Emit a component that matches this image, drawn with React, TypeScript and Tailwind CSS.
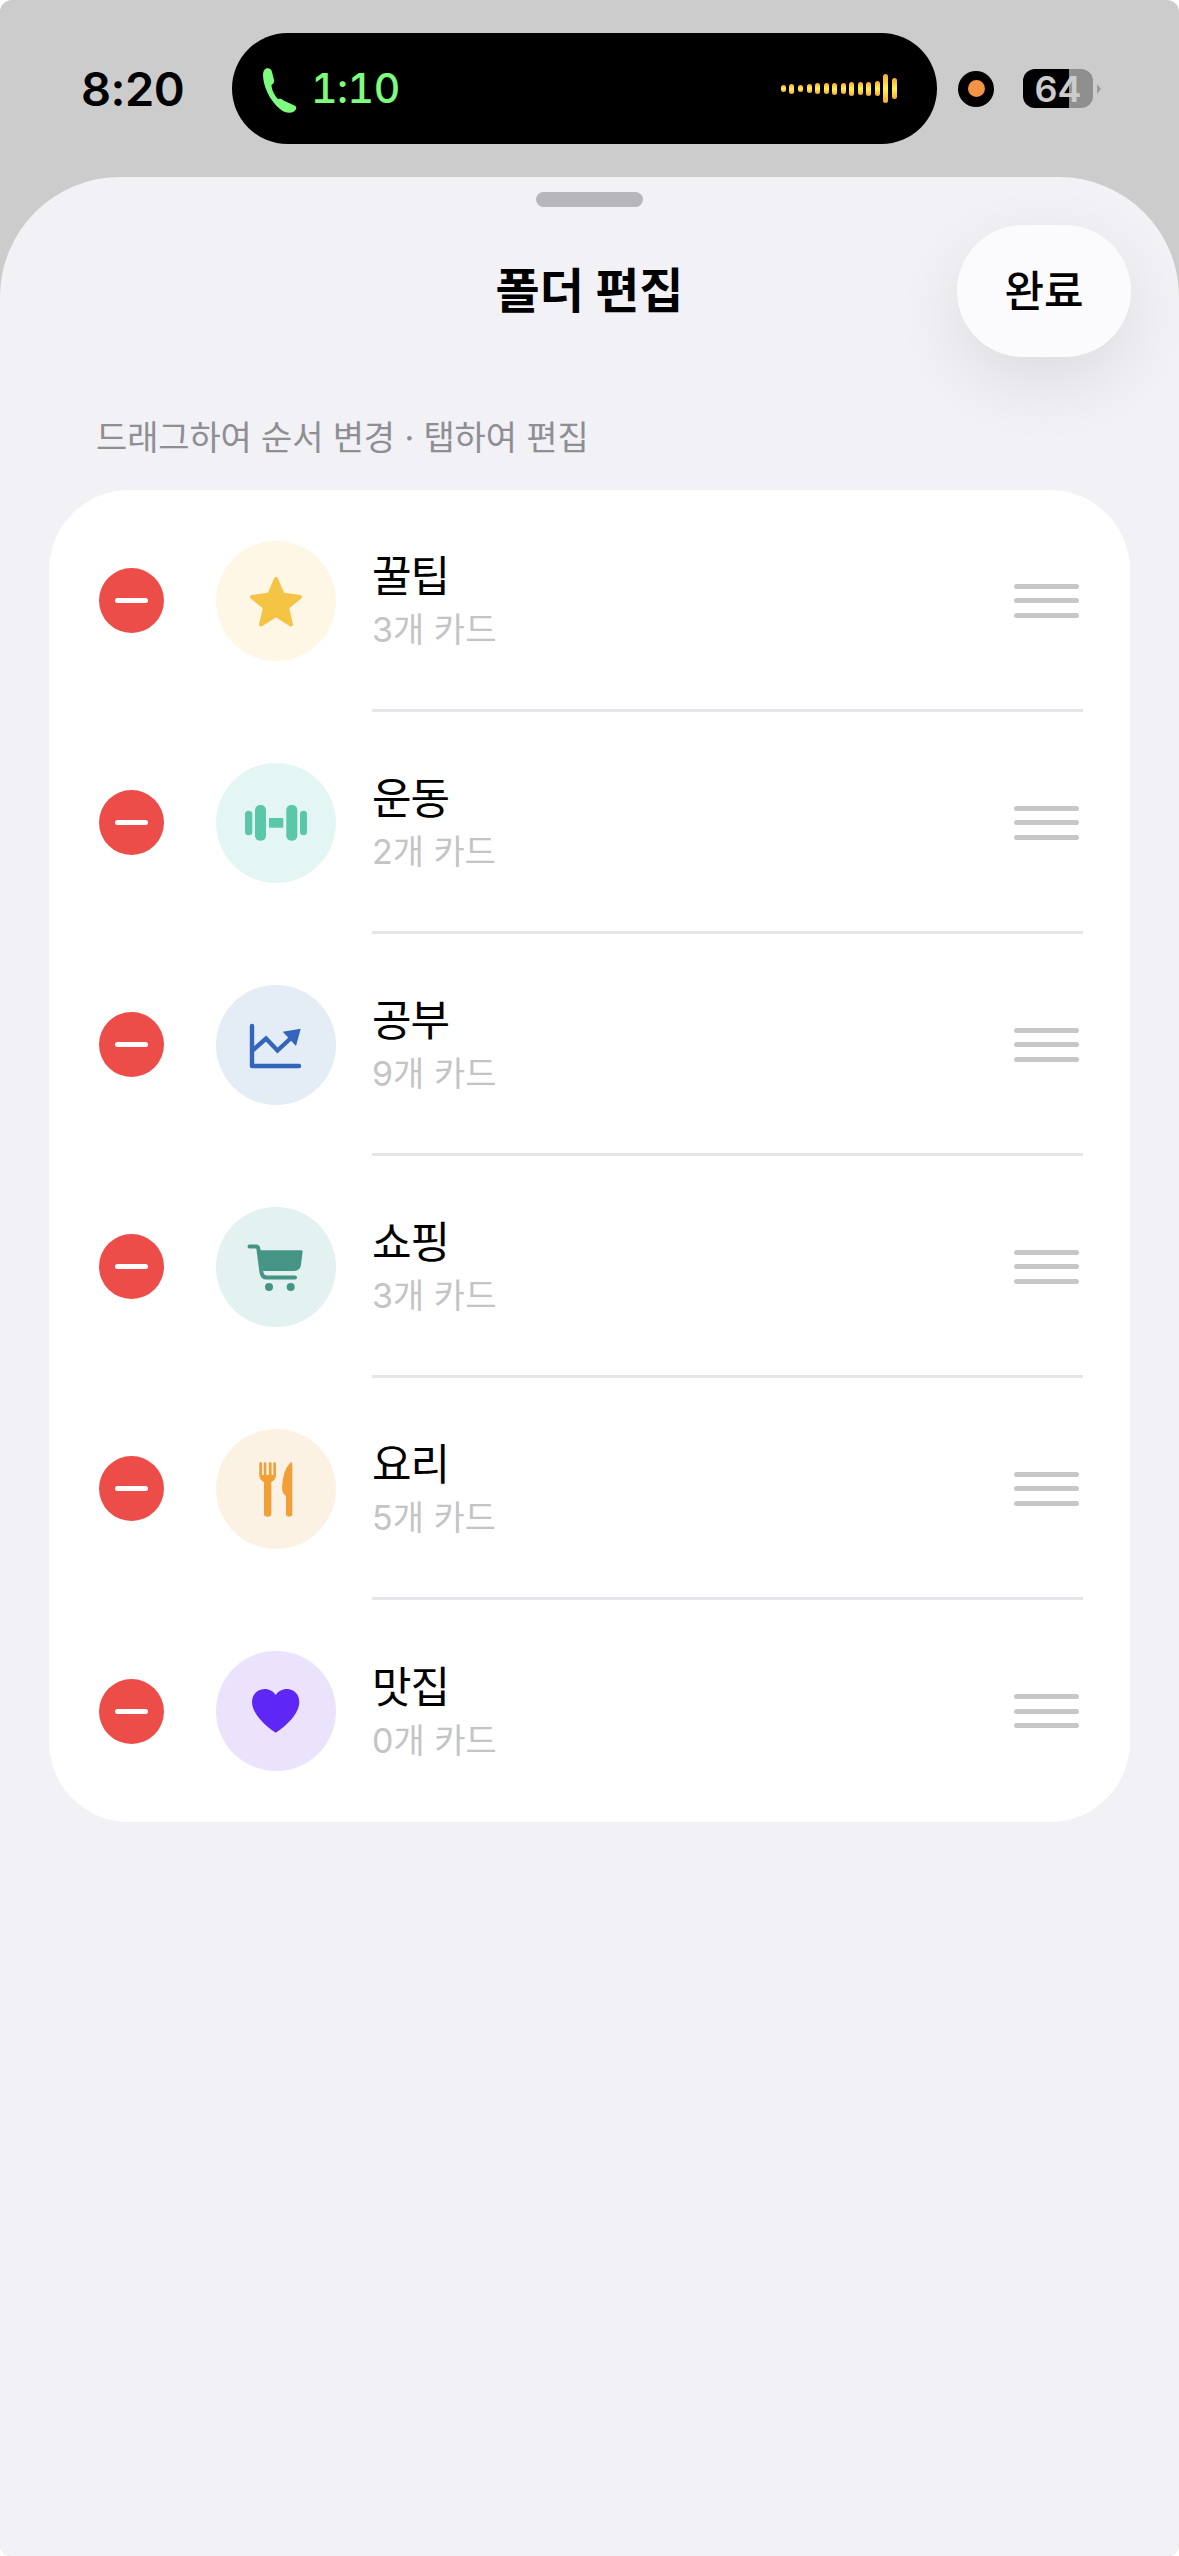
import React from "react";

type Folder = {
  name: string;
  count: number;
  tint: string;
  icon: React.ReactNode;
};

const StarIcon = () => (
  <svg viewBox="0 0 120 120" className="size-[120px]">
    <path
      d="M60 38 L66.7 53.5 L84 56 L71 66.5 L75 83.5 L60 74 L45 83.5 L49 66.5 L36 56 L53.3 53.5 Z"
      fill="#f5c445"
      stroke="#f5c445"
      strokeWidth="4"
      strokeLinejoin="round"
    />
  </svg>
);

const DumbbellIcon = () => (
  <svg viewBox="0 0 120 120" className="size-[120px]" fill="#5ac8a8">
    <rect x="29" y="47.7" width="7.3" height="24.6" rx="3.6" />
    <rect x="39" y="42" width="11" height="35.7" rx="5" />
    <rect x="53" y="55" width="14.3" height="9.7" />
    <rect x="70.3" y="42" width="11" height="35.7" rx="5" />
    <rect x="84" y="47.7" width="7" height="24.6" rx="3.5" />
  </svg>
);

const ChartIcon = () => (
  <svg viewBox="0 0 120 120" className="size-[120px]">
    <path
      d="M36 41 V81 H83"
      fill="none"
      stroke="#3366bb"
      strokeWidth="4.4"
      strokeLinecap="round"
      strokeLinejoin="round"
    />
    <path d="M37 65 L50 53.5 L61.5 65.5 L75 53" fill="none" stroke="#3366bb" strokeWidth="4.4" />
    <path d="M66.7 46.7 L84.7 43.7 L80 61 Z" fill="#3366bb" />
  </svg>
);

const CartIcon = () => (
  <svg viewBox="0 0 120 120" className="size-[120px]">
    <path
      d="M33.5 39.5 H40 Q42 39.5 42.4 42 L45.4 65 Q46 70.6 51 70.6 H79"
      fill="none"
      stroke="#459586"
      strokeWidth="4"
      strokeLinecap="round"
    />
    <path
      d="M43 43.3 H85.5 Q86.8 43.3 86.6 45 L85 57.5 Q84.4 64 78 64 H47.3 Z"
      fill="#459586"
    />
    <circle cx="53" cy="80" r="4" fill="#459586" />
    <circle cx="74.7" cy="80" r="4" fill="#459586" />
  </svg>
);

const CutleryIcon = () => (
  <svg viewBox="0 0 120 120" className="size-[120px]" fill="#f29f38">
    <path d="M43.3 34.5 Q43.3 33 44.6 33 Q46 33 46 34.5 V46 H47.7 V34.5 Q47.7 33 49 33 Q50.4 33 50.4 34.5 V46 H52.9 V34.5 Q52.9 33 54.2 33 Q55.6 33 55.6 34.5 V46 H57.3 V34.5 Q57.3 33 58.6 33 Q60 33 60 34.5 V46 Q60 51 55.3 53 V85 Q55.3 87.7 51.6 87.7 Q48 87.7 48 85 V53 Q43.3 51 43.3 46 Z" />
    <path d="M76.3 35 V85 Q76.3 87.7 73.2 87.7 Q70 87.7 70 85 V67 Q66 64 66 59 Q66.5 42 74 34 Q76.3 32 76.3 35 Z" />
  </svg>
);

const HeartIcon = () => (
  <svg viewBox="0 0 120 120" className="size-[120px]">
    <path
      d="M59.7 81.7 C55 79 36 65 36 51 C36 43 42 38 48.5 38 C53.5 38 57.5 40.5 59.7 44 C62 40.5 66 38 71 38 C77.5 38 83.3 43 83.3 51 C83.3 65 64.5 79 59.7 81.7 Z"
      fill="#5f27f5"
    />
  </svg>
);

const PhoneIcon = () => (
  <svg viewBox="0 0 34 45" className="mt-[4px] h-[45px] w-[34px]">
    <path
      d="M3 0.5 C6 -0.5 8.5 1 9 4 L11 12 C11.5 14.5 10 16 8.5 17 C8.5 21 11 27 15 31 C17 30.5 19 30.5 20.5 32.5 L32.5 38 C34 40 33 42 31 43.5 C27 46 22 45 17 41 C7 33 0 18 0 7 C0 4 1 1.5 3 0.5 Z"
      fill="#7dfc7f"
    />
  </svg>
);

const folders: Folder[] = [
  { name: "꿀팁", count: 3, tint: "bg-[#fef7e6]", icon: <StarIcon /> },
  { name: "운동", count: 2, tint: "bg-[#e3f6f3]", icon: <DumbbellIcon /> },
  { name: "공부", count: 9, tint: "bg-[#e4ecf6]", icon: <ChartIcon /> },
  { name: "쇼핑", count: 3, tint: "bg-[#e3f1f0]", icon: <CartIcon /> },
  { name: "요리", count: 5, tint: "bg-[#fcf2e3]", icon: <CutleryIcon /> },
  { name: "맛집", count: 0, tint: "bg-[#ebe3fc]", icon: <HeartIcon /> },
];

const waveHeights = [7, 10, 7, 9, 11, 11, 12, 11, 14, 13, 14, 15, 29, 21];

const StatusBar = () => (
  <div className="flex h-[177px] shrink-0 items-center pl-[81px]">
    <span className="w-[151px] text-[47px] leading-none font-semibold tracking-[-0.5px] text-black">8:20</span>
    <div className="flex h-[111px] w-[705px] items-center rounded-full bg-black pr-[40px] pl-[31px]">
      <PhoneIcon />
      <span className="ml-[14px] text-[41px] leading-none font-medium tracking-[-0.5px] text-[#7dfc7f] tabular-nums">
        1:10
      </span>
      <div className="ml-auto flex items-center gap-[3.55px]">
        {waveHeights.map((height, i) => (
          <div
            key={i}
            className="w-[5px] rounded-full bg-linear-to-b from-[#f6a838] via-[#fff34f] to-[#f6a838]"
            style={{ height }}
          />
        ))}
      </div>
    </div>
    <div className="ml-[21px] flex size-[36px] items-center justify-center rounded-full bg-black">
      <div className="size-[17px] rounded-full bg-[#f29445]" />
    </div>
    <div className="ml-[29px] flex items-center">
      <div className="flex h-[39px] w-[70px] items-center justify-center rounded-[12px] bg-[linear-gradient(90deg,#000_66%,#8f8f8f_66%)]">
        <span className="text-[36px] leading-none font-semibold text-[#cccccc]">64</span>
      </div>
      <div className="ml-[4px] h-0 w-0 border-y-[5px] border-l-[4px] border-y-transparent border-l-[#9a9a9a]" />
    </div>
  </div>
);

const FolderRow = ({ folder, last }: { folder: Folder; last: boolean }) => (
  <div>
    <div className={`flex items-center pr-[51px] pl-[50px] ${last ? "h-[222px]" : "h-[219px] pt-[2px]"}`}>
      <div className="flex size-[65px] items-center justify-center rounded-full bg-[#ed4d49]">
        <div className="h-[5px] w-[33px] rounded-full bg-white" />
      </div>
      <div className={`ml-[52px] flex size-[120px] items-center justify-center rounded-full ${folder.tint}`}>
        {folder.icon}
      </div>
      <div className="ml-[36px] flex flex-1 flex-col pt-[5px]">
        <span className="text-[43px] leading-[54px] tracking-[-1px] text-black">{folder.name}</span>
        <span className="text-[34px] leading-[54px] text-[#c4c4c6]">{folder.count}개 카드</span>
      </div>
      <div className="flex w-[65px] flex-col gap-[9.5px]">
        <div className="h-[5px] rounded-full bg-[#c7c7c7]" />
        <div className="h-[5px] rounded-full bg-[#c7c7c7]" />
        <div className="h-[5px] rounded-full bg-[#c7c7c7]" />
      </div>
    </div>
    {!last && <div className="mr-[47px] ml-[323px] h-[3px] bg-[#e5e5ea]" />}
  </div>
);

export default function App() {
  return (
    <div className="flex h-[2556px] w-[1179px] flex-col overflow-hidden rounded-[12px] bg-[#cccccc] font-['Inter','Noto_Sans_CJK_KR',sans-serif]">
      <StatusBar />
      <div className="flex flex-1 flex-col rounded-t-[120px] bg-[#f1f1f6]">
        <div className="mx-auto mt-[15px] h-[15px] w-[107px] rounded-full bg-[#b6b6bb]" />

        <div className="mt-[18px] grid grid-cols-[1fr_auto_1fr] items-center">
          <div />
          <h1 className="text-[48px] leading-none font-bold text-black">폴더 편집</h1>
          <button className="mr-[48px] h-[132px] w-[174px] justify-self-end rounded-full bg-[#fbfbfd] text-[43px] font-medium text-black shadow-[0_24px_70px_rgba(0,0,0,0.09)]">
            완료
          </button>
        </div>

        <p className="mt-[57px] pl-[96px] text-[34px] leading-[48px] tracking-[-0.15px] text-[#8e8e93]">
          드래그하여 순서 변경 · 탭하여 편집
        </p>

        <div className="mx-[49px] mt-[28px] overflow-hidden rounded-[80px] bg-white">
          {folders.map((folder, i) => (
            <FolderRow key={folder.name} folder={folder} last={i === folders.length - 1} />
          ))}
        </div>
      </div>
    </div>
  );
}
